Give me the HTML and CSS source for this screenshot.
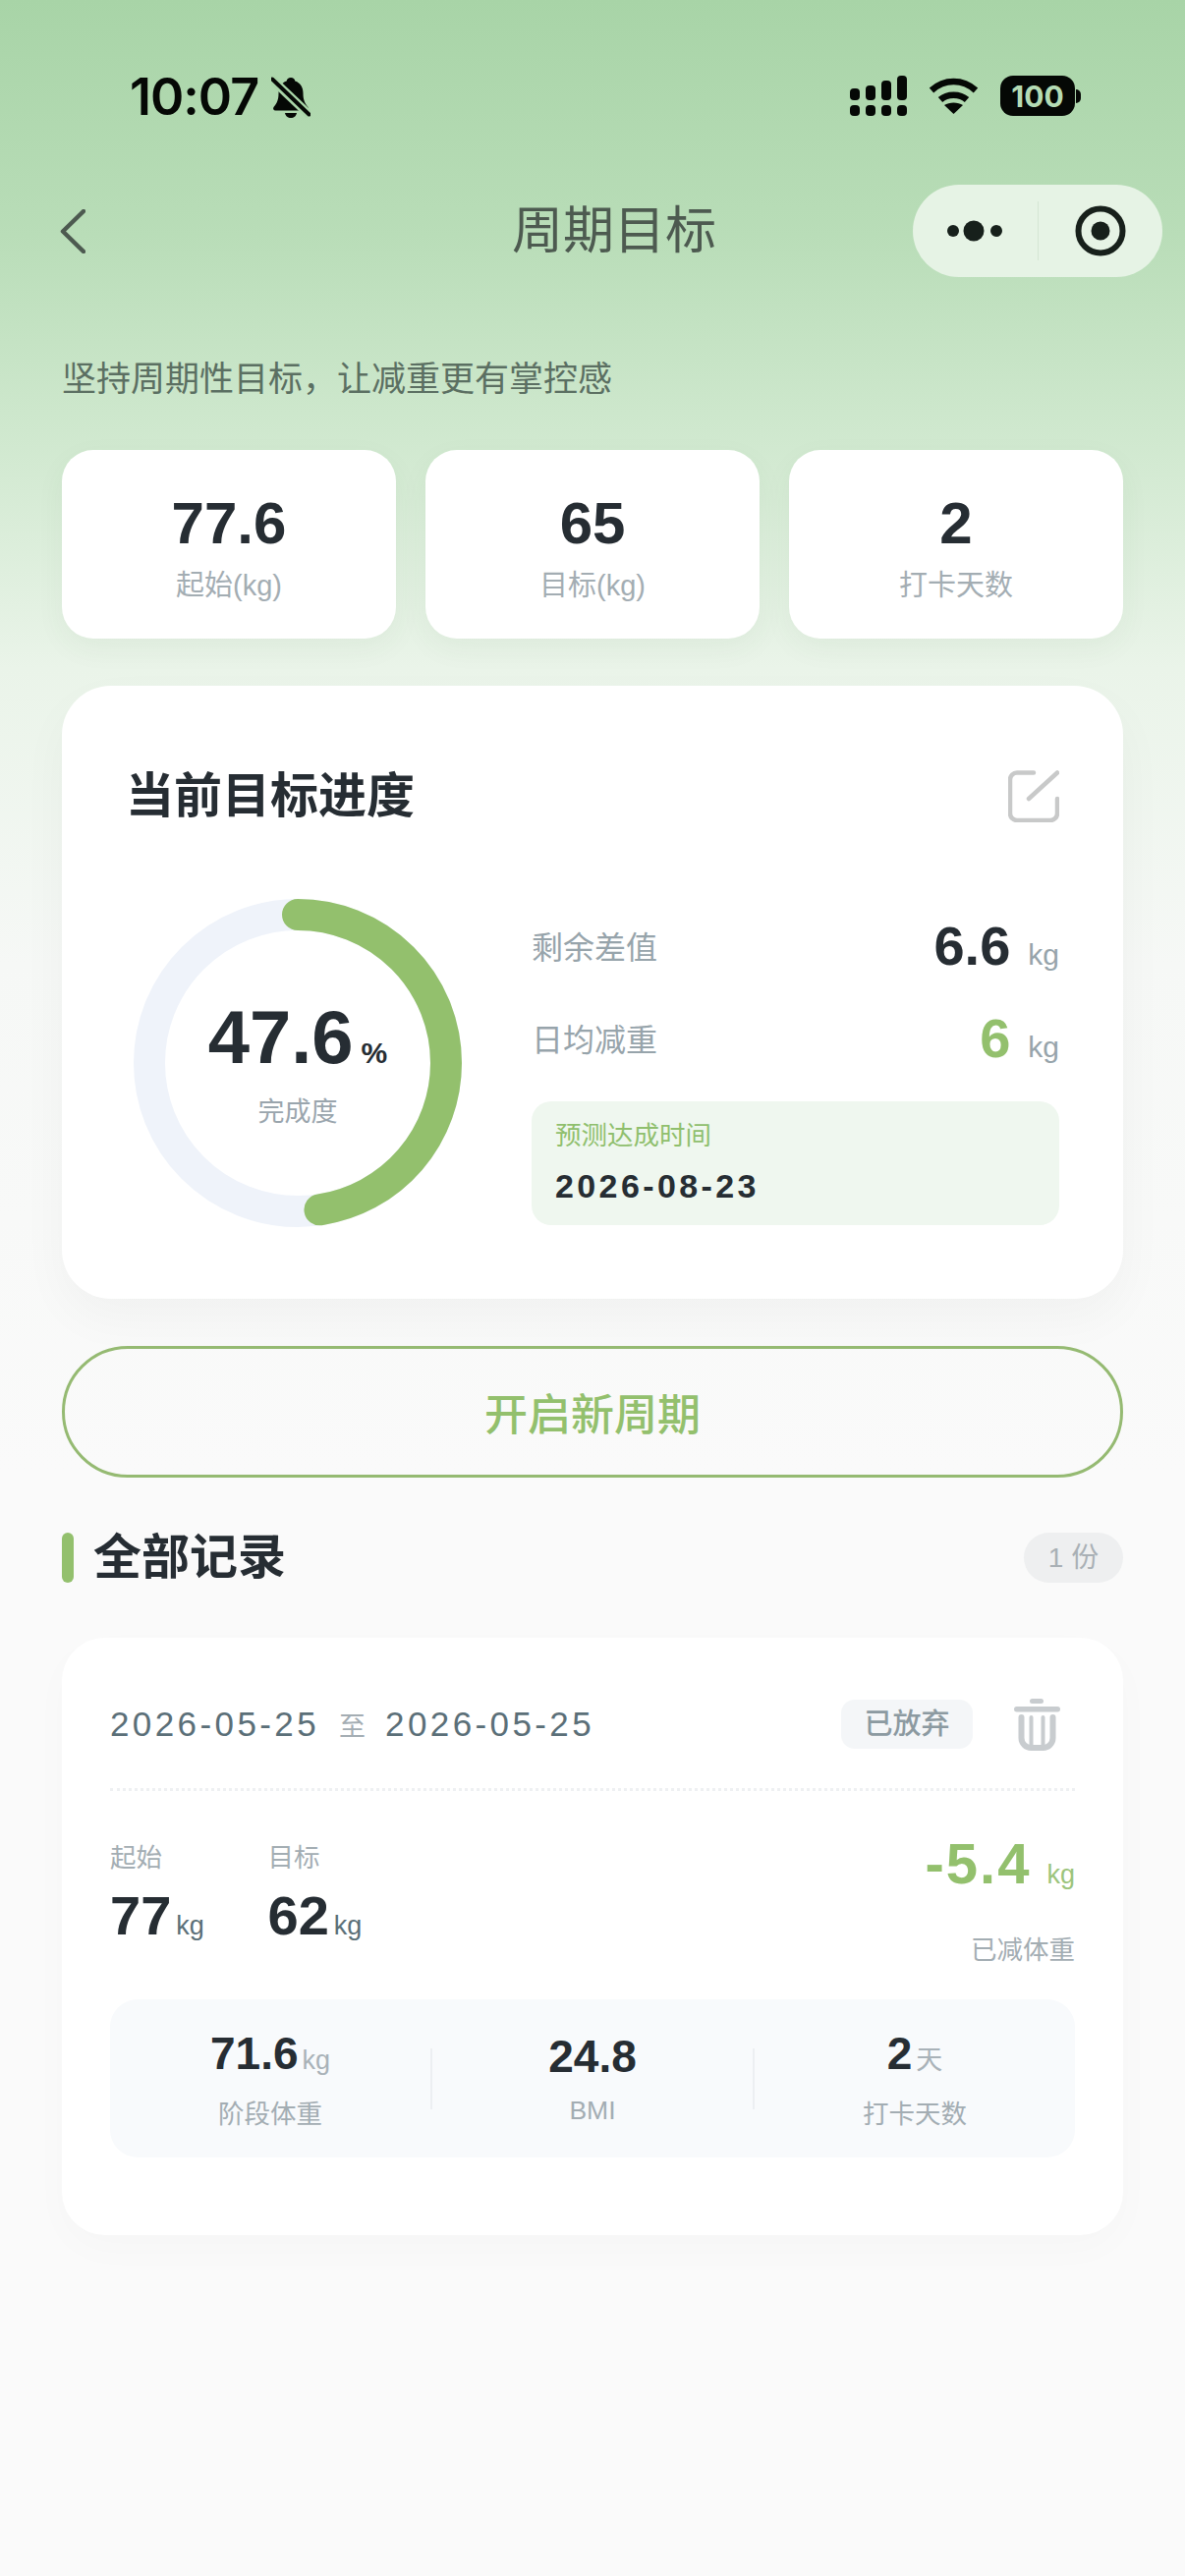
FILE: index.html
```html
<!DOCTYPE html>
<html lang="zh-CN">
  <head>
    <meta charset="utf-8">
    <title>周期目标</title>
    <link rel="stylesheet" href="styles.css">
  </head>
  <body>
    <div class="status-bar">
      <div class="status-left">
        <span class="clock">10:07</span>
        <svg class="bell" viewBox="0 0 40 43" width="40" height="43">
          <path d="M20 2c2.500 0 4 1.500 4.300 3.500C30 7.500 32.500 12 32.500 18c0 6 1.500 10 5 14 1 1.500 .3 3.500-2 3.500H4.500c-2.300 0-3-2-2-3.500 3.500-4 5-8 5-14 0-6 2.500-10.500 8.200-12.500C16 3.500 17.500 2 20 2z"/>
          <path d="M14 38h12c-.5 3-3 5-6 5s-5.500-2-6-5z"/>
          <path class="bell-gap" d="M0 3l39 37"/>
          <path class="bell-slash" d="M1 3.500l37.500 36"/>
        </svg>
      </div>
      <div class="status-right">
        <svg viewBox="0 0 58 41" width="58" height="41">
          <rect x="0" y="13" width="10" height="12" rx="4"/>
          <rect x="16" y="10" width="10" height="15" rx="4"/>
          <rect x="32" y="5" width="10" height="20" rx="4"/>
          <rect x="48" y="0" width="10" height="25" rx="4"/>
          <rect x="0" y="30" width="10" height="11" rx="4"/>
          <rect x="16" y="30" width="10" height="11" rx="4"/>
          <rect x="32" y="30" width="10" height="11" rx="4"/>
          <rect x="48" y="30" width="10" height="11" rx="4"/>
        </svg>
        <svg class="wifi" viewBox="0 0 51 37" width="51" height="37">
          <path class="wifi-arc" d="M3 13C16 1 35 1 48 13"/>
          <path class="wifi-arc" d="M12 22.500C19 16 32 16 39 22.500"/>
          <path d="M25.500 37L16 28C21 24.500 30 24.500 35 28z"/>
        </svg>
        <div class="battery"><span class="battery-num">100</span></div>
        <div class="battery-tip"></div>
      </div>
    </div>

    <div class="nav">
      <svg class="nav-back" viewBox="0 0 26 45" width="26" height="45">
        <path d="M24 2L3 22.500 24 43"/>
      </svg>
      <div class="nav-title">周期目标</div>
      <div class="capsule">
        <div class="capsule-half">
          <svg viewBox="0 0 56 22" width="56" height="22">
            <circle cx="6" cy="11" r="6"/>
            <circle cx="27" cy="11" r="10.500"/>
            <circle cx="50" cy="11" r="6"/>
          </svg>
        </div>
        <div class="capsule-line"></div>
        <div class="capsule-half">
          <svg viewBox="0 0 52 52" width="52" height="52">
            <circle class="capsule-ring" cx="26" cy="26" r="22.500"/>
            <circle cx="26" cy="26" r="9.500"/>
          </svg>
        </div>
      </div>
    </div>

    <div class="page">
      <p class="subtitle">坚持周期性目标，让减重更有掌控感</p>

      <div class="stats">
        <div class="stat-card">
          <div class="stat-value">77.6</div>
          <div class="stat-label">起始(kg)</div>
        </div>
        <div class="stat-card">
          <div class="stat-value">65</div>
          <div class="stat-label">目标(kg)</div>
        </div>
        <div class="stat-card">
          <div class="stat-value">2</div>
          <div class="stat-label">打卡天数</div>
        </div>
      </div>

      <div class="goal-card">
        <div class="goal-head">
          <h2 class="goal-title">当前目标进度</h2>
          <svg class="icon-edit" viewBox="0 0 52 53" width="52" height="53">
            <path d="M26 2.500H9a7 7 0 0 0-7 7V44a7 7 0 0 0 7 7h34a7 7 0 0 0 7-7V29"/>
            <path d="M50 2.500L21 29"/>
          </svg>
        </div>
        <div class="goal-body">
          <div class="ring">
            <svg class="ring-svg" viewBox="0 0 334 334" width="334" height="334">
              <circle class="ring-track" cx="167" cy="167" r="151"/>
              <circle class="ring-bar" cx="167" cy="167" r="151" transform="rotate(-90 167 167)"/>
            </svg>
            <div class="ring-text">
              <div class="ring-num">47.6<span class="ring-pct">%</span></div>
              <div class="ring-label">完成度</div>
            </div>
          </div>
          <div class="goal-info">
            <div class="info-row">
              <span class="info-label">剩余差值</span>
              <span class="info-value">6.6<span class="info-unit">kg</span></span>
            </div>
            <div class="info-row">
              <span class="info-label">日均减重</span>
              <span class="info-value green">6<span class="info-unit">kg</span></span>
            </div>
            <div class="predict">
              <div class="predict-label">预测达成时间</div>
              <div class="predict-date">2026-08-23</div>
            </div>
          </div>
        </div>
      </div>

      <button class="new-btn">开启新周期</button>

      <div class="section-head">
        <span class="section-bar"></span>
        <h2 class="section-title">全部记录</h2>
        <span class="section-count">1 份</span>
      </div>

      <div class="record">
        <div class="record-head">
          <span class="record-date">2026-05-25</span>
          <span class="record-to">至</span>
          <span class="record-date">2026-05-25</span>
          <span class="record-tag">已放弃</span>
          <svg class="icon-trash" viewBox="0 0 47 54" width="47" height="54">
            <rect x="16" y="1" width="14" height="5" rx="2.500"/>
            <rect x="0" y="9" width="47" height="5.500" rx="2.750"/>
            <path class="trash-body" d="M7.500 20V41a10 10 0 0 0 10 10h12a10 10 0 0 0 10-10V20"/>
            <path class="trash-line" d="M17.500 20V50M29.500 20V50"/>
          </svg>
        </div>

        <div class="record-main">
          <div class="record-left">
            <div class="record-col">
              <div class="small-label">起始</div>
              <div class="record-num">77<span class="record-unit">kg</span></div>
            </div>
            <div class="record-col">
              <div class="small-label">目标</div>
              <div class="record-num">62<span class="record-unit">kg</span></div>
            </div>
          </div>
          <div class="record-right">
            <div class="lost-num">-5.4<span class="lost-unit">kg</span></div>
            <div class="small-label">已减体重</div>
          </div>
        </div>

        <div class="record-box">
          <div class="box-cell">
            <div class="box-num">71.6<span class="box-unit">kg</span></div>
            <div class="small-label">阶段体重</div>
          </div>
          <div class="box-line"></div>
          <div class="box-cell">
            <div class="box-num">24.8</div>
            <div class="small-label">BMI</div>
          </div>
          <div class="box-line"></div>
          <div class="box-cell">
            <div class="box-num">2<span class="box-unit">天</span></div>
            <div class="small-label">打卡天数</div>
          </div>
        </div>
      </div>
    </div>
  </body>
</html>
```
FILE: styles.css
```css
* {
  box-sizing: border-box;
}
html, body {
  margin: 0;
  padding: 0;
}
body {
  width: 1206px;
  height: 2622px;
  overflow: hidden;
  font-family: "Liberation Sans", "Noto Sans CJK SC", sans-serif;
  color: #262d33;
  background: linear-gradient(180deg, #a8d4a7 0, #b9ddb8 240px, #cde7cc 420px, #eaf4e9 680px, #f6f8f6 980px, #fafafa 1500px);
}

/* status bar */
.status-bar {
  height: 188px;
  padding: 77px 106px 0 132px;
  display: flex;
  justify-content: space-between;
  align-items: flex-start;
}
.status-left {
  display: flex;
  align-items: center;
  gap: 13px;
  height: 43px;
}
.clock {
  font-family: Inter, sans-serif;
  font-weight: 600;
  font-size: 52px;
  line-height: 43px;
  color: #050805;
  letter-spacing: -1px;
}
.bell path {
  fill: #050805;
}
.bell .bell-gap {
  fill: none;
  stroke: #a9d5a8;
  stroke-width: 9;
}
.bell .bell-slash {
  fill: none;
  stroke: #050805;
  stroke-width: 4;
  stroke-linecap: round;
}
.status-right {
  display: flex;
  align-items: center;
  height: 41px;
}
.status-right svg {
  fill: #050805;
}
.wifi {
  margin-left: 22px;
  margin-right: 22px;
}
.wifi-arc {
  fill: none;
  stroke: #050805;
  stroke-width: 6.500;
}
.battery {
  width: 76px;
  height: 41px;
  border-radius: 13px;
  background: #050805;
  display: flex;
  align-items: center;
  justify-content: center;
}
.battery-num {
  font-family: Inter, sans-serif;
  font-weight: 700;
  font-size: 30px;
  color: #b5dcb4;
}
.battery-tip {
  width: 5px;
  height: 14px;
  margin-left: 1px;
  background: #050805;
  border-radius: 0 6px 6px 0;
}

/* nav */
.nav {
  height: 94px;
  padding: 0 23px 0 61px;
  display: flex;
  align-items: center;
}
.nav-back {
  fill: none;
  stroke: #4d5a50;
  stroke-width: 4.500;
  stroke-linecap: round;
  stroke-linejoin: round;
}
.nav-title {
  margin-left: 434px;
  font-size: 52px;
  line-height: 60px;
  color: #4d5a50;
}
.capsule {
  margin-left: auto;
  width: 254px;
  height: 94px;
  border-radius: 47px;
  background: #e6f3e5;
  display: flex;
  align-items: center;
}
.capsule-half {
  flex: 1;
  display: flex;
  justify-content: center;
  align-items: center;
  fill: #17201b;
}
.capsule-ring {
  fill: none;
  stroke: #17201b;
  stroke-width: 6;
}
.capsule-line {
  width: 1px;
  height: 60px;
  background: #d5e5d4;
}

/* content */
.page {
  padding: 0 63px;
}
.subtitle {
  margin: 79px 0 0;
  font-size: 35px;
  line-height: 50px;
  color: #5b6f62;
}
.stats {
  margin-top: 47px;
  display: grid;
  grid-template-columns: repeat(3, 1fr);
  gap: 30px;
}
.stat-card {
  height: 192px;
  padding-top: 40px;
  background: #fff;
  border-radius: 32px;
  text-align: center;
  box-shadow: 0 10px 30px rgba(60, 90, 60, 0.05);
}
.stat-value {
  font-size: 60px;
  line-height: 70px;
  font-weight: 700;
}
.stat-label {
  margin-top: 8px;
  font-size: 29px;
  line-height: 40px;
  color: #a3adb3;
}

.goal-card {
  margin-top: 48px;
  height: 624px;
  padding: 82px 65px 0;
  background: #fff;
  border-radius: 50px;
  box-shadow: 0 20px 50px rgba(0, 0, 0, 0.035);
}
.goal-head {
  height: 60px;
  display: flex;
  justify-content: space-between;
  align-items: center;
}
.goal-title {
  margin: 0;
  font-size: 49px;
  line-height: 60px;
  font-weight: 700;
}
.icon-edit {
  fill: none;
  stroke: #c8c9c9;
  stroke-width: 4.500;
  stroke-linecap: round;
}
.goal-body {
  margin-top: 75px;
  padding-left: 8px;
  display: flex;
  gap: 71px;
}
.ring {
  width: 334px;
  height: 334px;
  display: grid;
  place-items: center;
  flex: none;
}
.ring-svg,
.ring-text {
  grid-area: 1 / 1;
}
.ring-track,
.ring-bar {
  fill: none;
  stroke-width: 32;
}
.ring-track {
  stroke: #eff3fa;
}
.ring-bar {
  stroke: #93c06d;
  stroke-linecap: round;
  stroke-dasharray: 451.600 948.800;
}
.ring-text {
  text-align: center;
}
.ring-num {
  font-size: 76px;
  line-height: 84px;
  font-weight: 700;
}
.ring-pct {
  margin-left: 8px;
  font-size: 30px;
}
.ring-label {
  font-size: 27px;
  line-height: 36px;
  color: #9aa5ad;
}
.goal-info {
  flex: 1;
}
.info-row {
  height: 94px;
  display: flex;
  justify-content: space-between;
  align-items: center;
}
.info-label {
  font-size: 32px;
  color: #97a4ab;
}
.info-value {
  font-size: 56px;
  font-weight: 700;
}
.info-value.green {
  color: #93c06d;
}
.info-unit {
  margin-left: 18px;
  font-size: 30px;
  font-weight: 400;
  color: #97a4ab;
}
.predict {
  margin-top: 18px;
  height: 126px;
  padding: 16px 24px 0;
  background: #eff7ef;
  border-radius: 20px;
}
.predict-label {
  font-size: 26.500px;
  line-height: 38px;
  color: #8fbf6d;
}
.predict-date {
  margin-top: 10px;
  font-size: 34px;
  line-height: 44px;
  font-weight: 700;
  letter-spacing: 3.400px;
}

.new-btn {
  display: block;
  width: 100%;
  height: 134px;
  margin-top: 48px;
  padding: 0;
  background: none;
  border: 3px solid #95ba72;
  border-radius: 67px;
  font-family: inherit;
  font-size: 44px;
  font-weight: 500;
  color: #93c06d;
}

.section-head {
  margin-top: 56px;
  height: 51px;
  display: flex;
  align-items: center;
}
.section-bar {
  width: 12px;
  height: 51px;
  border-radius: 6px;
  background: #93c06d;
}
.section-title {
  margin: 0 0 0 20px;
  font-size: 49px;
  line-height: 51px;
  font-weight: 700;
}
.section-count {
  margin-left: auto;
  width: 101px;
  height: 51px;
  border-radius: 26px;
  background: #eeeff0;
  text-align: center;
  font-size: 28px;
  line-height: 51px;
  color: #a9b0b5;
}

.record {
  margin-top: 56px;
  height: 608px;
  padding: 61px 49px 0;
  background: #fff;
  border-radius: 44px;
  box-shadow: 0 14px 40px rgba(0, 0, 0, 0.02);
}
.record-head {
  display: flex;
  align-items: center;
  height: 92px;
  padding-bottom: 38px;
  border-bottom: 3px dotted #eef0f2;
  box-sizing: content-box;
  height: 54px;
}
.record-date {
  font-size: 35px;
  letter-spacing: 3.400px;
  color: #5b6f78;
}
.record-to {
  margin: 0 20px;
  font-size: 27px;
  color: #a4adb3;
}
.record-tag {
  margin-left: auto;
  width: 134px;
  height: 50px;
  border-radius: 14px;
  background: #f4f6f8;
  text-align: center;
  font-size: 29px;
  line-height: 50px;
  font-weight: 500;
  color: #8c9aa1;
}
.icon-trash {
  margin-left: 42px;
  margin-right: 15px;
  fill: #c8cccf;
}
.trash-body {
  fill: none;
  stroke: #c8cccf;
  stroke-width: 6;
  stroke-linecap: round;
}
.trash-line {
  fill: none;
  stroke: #c8cccf;
  stroke-width: 4;
  stroke-linecap: round;
}
.record-main {
  height: 129px;
  margin-top: 44px;
  display: flex;
  justify-content: space-between;
}
.record-left {
  padding-top: 6px;
  display: flex;
  gap: 0;
}
.record-col {
  width: 160.500px;
}
.small-label {
  font-size: 26.500px;
  line-height: 36px;
  color: #a3adb3;
}
.record-num {
  margin-top: 11px;
  font-size: 56px;
  line-height: 60px;
  font-weight: 700;
}
.record-unit {
  margin-left: 5px;
  font-size: 27px;
  font-weight: 400;
  color: #5b6f78;
}
.record-right {
  text-align: right;
}
.lost-num {
  font-size: 58px;
  line-height: 60px;
  font-weight: 700;
  letter-spacing: 2px;
  color: #93c06d;
}
.lost-unit {
  margin-left: 16px;
  font-size: 27px;
  font-weight: 400;
  letter-spacing: 0;
  color: #9cc47c;
}
.record-right .small-label {
  margin-top: 29px;
}
.record-box {
  margin-top: 39px;
  height: 161px;
  background: #f8fafc;
  border-radius: 28px;
  display: flex;
  align-items: center;
}
.box-cell {
  flex: 1;
  text-align: center;
}
.box-num {
  font-size: 46px;
  line-height: 56px;
  font-weight: 700;
}
.box-unit {
  margin-left: 4px;
  font-size: 27px;
  font-weight: 400;
  color: #a9b2b8;
}
.box-cell .small-label {
  margin-top: 9px;
}
.box-line {
  width: 2px;
  height: 62px;
  background: #eceff2;
}
```
